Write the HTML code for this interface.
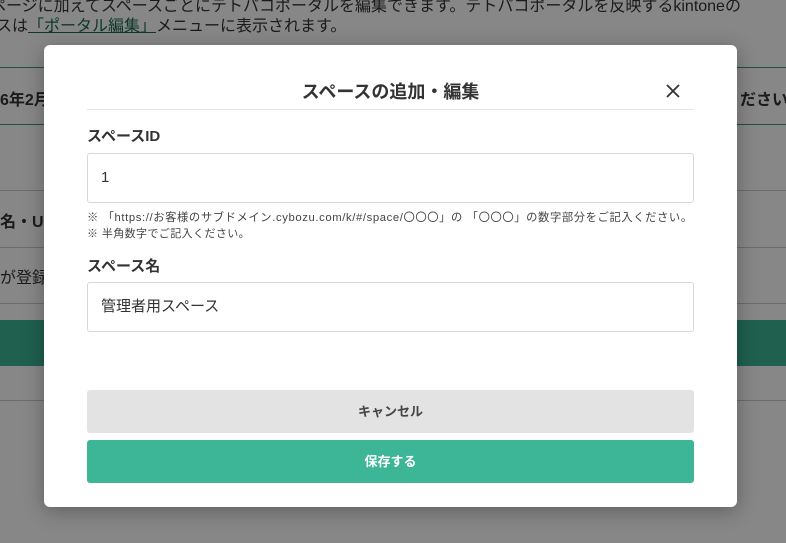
<!DOCTYPE html>
<html><head><meta charset="utf-8"><style>
*{margin:0;padding:0;box-sizing:border-box}
body{width:786px;height:543px;overflow:hidden;position:relative;background:#fff;font-family:"Liberation Sans","Noto Sans CJK JP",sans-serif;color:#333}
.bg{position:absolute;left:0;top:0;width:786px;height:543px}
.t{position:absolute;font-size:16px;white-space:nowrap}
.ov{position:absolute;left:0;top:0;width:786px;height:543px;background:rgba(0,0,0,0.47)}
.modal{position:absolute;left:44px;top:45px;width:693px;height:462px;background:#fff;border-radius:6px;box-shadow:0 4px 20px rgba(0,0,0,.3)}
.title{position:absolute;width:693px;top:78px;text-align:center;font-size:18px;font-weight:bold;color:#333}
.inp{position:absolute;left:87px;width:607px;height:50px;border:1px solid #d8d8d8;border-radius:3px;background:#fff;font-size:15px;padding-left:13px;line-height:48px;color:#333}
.lab{position:absolute;left:87px;font-size:15px;font-weight:bold;color:#333}
.note{position:absolute;left:87px;font-size:11px;color:#444;white-space:nowrap}
.btn{position:absolute;left:87px;width:607px;height:43px;border-radius:3px;text-align:center;line-height:43px;font-size:13px;font-weight:bold}
</style></head><body>
<div class="bg">
<div class="t" style="left:-10px;top:-8px">ページに加えてスペースごとにテトパコポータルを編集できます。テトパコポータルを反映するkintoneの</div>
<div class="t" style="left:-4px;top:12px">スは<span style="color:#1a6b50;text-decoration:underline">「ポータル編集」</span>メニューに表示されます。</div>
<div style="position:absolute;left:0;top:67px;width:786px;height:1px;background:#3a9a7c"></div>
<div class="t" style="left:0;top:86px;font-weight:bold">6年2月</div>
<div class="t" style="left:740px;top:86px;font-weight:bold">ださい。</div>
<div style="position:absolute;left:0;top:124px;width:786px;height:1px;background:#3a9a7c"></div>
<div style="position:absolute;left:0;top:190px;width:786px;height:1px;background:#ccc"></div>
<div class="t" style="left:0;top:208px;font-weight:bold">名・U</div>
<div style="position:absolute;left:0;top:247px;width:786px;height:1px;background:#ccc"></div>
<div class="t" style="left:0;top:264px">が登録</div>
<div style="position:absolute;left:0;top:303px;width:786px;height:1px;background:#ccc"></div>
<div style="position:absolute;left:0;top:320px;width:786px;height:46px;background:#3bb594"></div>
<div style="position:absolute;left:0;top:400px;width:786px;height:1px;background:#ccc"></div>
</div>
<div class="ov"></div>
<div class="modal"></div>
<div class="title" style="left:44px">スペースの追加・編集</div>
<svg style="position:absolute;left:666px;top:84px" width="14" height="14" viewBox="0 0 14 14"><path d="M1 1L13 13M13 1L1 13" stroke="#333" stroke-width="1.8"/></svg>
<div style="position:absolute;left:87px;top:109px;width:607px;height:1px;background:#e6e6e6"></div>
<div class="lab" style="top:125px">スペースID</div>
<div class="inp" style="top:153px">1</div>
<div class="note" style="top:209px;font-size:11.3px;letter-spacing:0.6px">※ 「https://お客様のサブドメイン.cybozu.com/k/#/space/〇〇〇」の 「〇〇〇」の数字部分をご記入ください。</div>
<div class="note" style="top:225px;letter-spacing:0.4px">※ 半角数字でご記入ください。</div>
<div class="lab" style="top:255px">スペース名</div>
<div class="inp" style="top:282px">管理者用スペース</div>
<div class="btn" style="top:390px;background:#e3e3e3;color:#444">キャンセル</div>
<div class="btn" style="top:440px;background:#3db597;color:#fff">保存する</div>
</body></html>
